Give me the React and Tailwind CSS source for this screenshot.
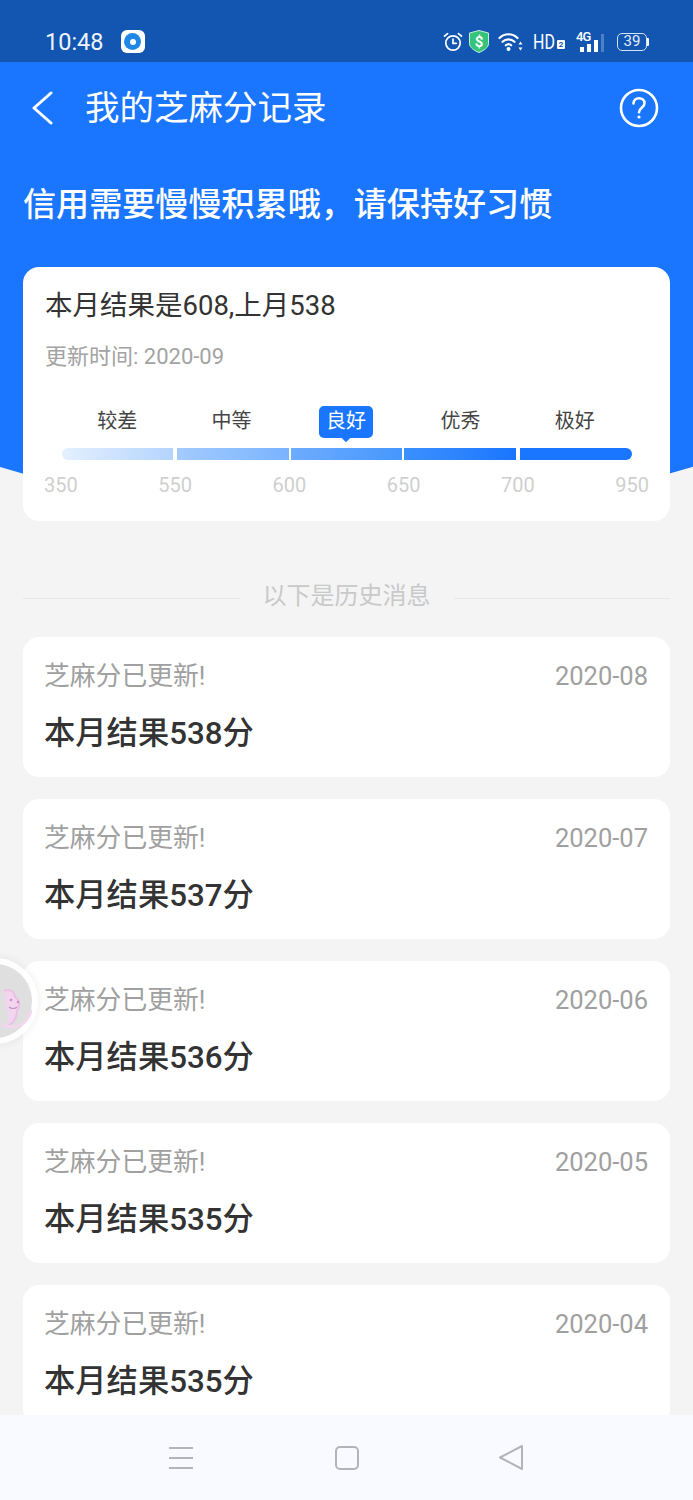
import React from 'react';

const FONT = 'font-[Roboto,"Noto_Sans_CJK_SC",sans-serif]';

const LEVELS = ['较差', '中等', '良好', '优秀', '极好'];
const SCORES = ['350', '550', '600', '650', '700', '950'];

const SEGMENTS = [
  'w-[111px] rounded-l-full bg-gradient-to-r from-[#e4f0fe] to-[#b4d4fd]',
  'ml-[4px] w-[112px] bg-gradient-to-r from-[#a3cbfd] to-[#79b4fe]',
  'ml-[2px] w-[111px] bg-gradient-to-r from-[#6dacfe] to-[#4597fe]',
  'ml-[2px] w-[112px] bg-gradient-to-r from-[#3b90fe] to-[#1a76ff]',
  'ml-[4px] w-[112px] rounded-r-full bg-[#1a76ff]',
];

const HISTORY = [
  { date: '2020-08', score: 538 },
  { date: '2020-07', score: 537 },
  { date: '2020-06', score: 536 },
  { date: '2020-05', score: 535 },
  { date: '2020-04', score: 535 },
];

const StatusBar = () => (
  <div className="flex h-[62px] shrink-0 items-end bg-[#1256b2] pb-[9px] pl-[45px] pr-[44px] text-white">
    <span className="mb-[-2px] text-[23.5px] leading-[26px] text-[#eef4fc]">10:48</span>
    <div className="ml-[17px] flex h-[23px] w-[24px] items-center justify-center rounded-[6px] bg-white">
      <div className="flex h-[17px] w-[17px] items-center justify-center rounded-full bg-[#2187e6]">
        <div className="h-[6px] w-[6px] rounded-full bg-white" />
      </div>
    </div>
    <div className="ml-auto flex items-center">
      <svg width="20" height="20" viewBox="0 0 20 20" fill="none" stroke="white" strokeWidth="1.7" strokeLinecap="round">
        <circle cx="10" cy="11" r="7.2" />
        <path d="M10 7v4.3h3.4M1.500 4.200 4.600 1.600M18.500 4.200l-3.100-2.600" />
      </svg>
      <svg className="ml-[6px]" width="20" height="23" viewBox="0 0 20 23">
        <path d="M10 .5 19.500 3v10.500c0 4-4.500 7-9.500 9-5-2-9.500-5-9.500-9V3z" fill="#35c47a" stroke="#c8f0da" strokeWidth="1" />
        <text x="10" y="16.500" textAnchor="middle" fontSize="15" fontWeight="700" fill="white" fontFamily="Roboto">$</text>
      </svg>
      <svg className="ml-[9px]" width="25" height="20" viewBox="0 0 25 20" fill="none" stroke="white" strokeWidth="2.200" strokeLinecap="round">
        <path d="M1.500 6C6.500 1 14.500 1 19.500 6M4.500 9.800c3.500-3.300 8.500-3.300 12 0M7.800 13.300c1.700-1.500 3.700-1.500 5.400 0" />
        <circle cx="10.500" cy="17" r="2" fill="white" stroke="none" />
        <path d="M22.500 9.500 24.500 12.500h-4zM22.500 18.500 24.500 15.500h-4z" fill="white" stroke="none" />
      </svg>
      <span className="ml-[10px] w-[22px] origin-left scale-x-[0.8] text-[20px] leading-none text-white">HD</span>
      <span className="ml-[2px] mt-[6px] flex h-[9px] w-[8px] items-center justify-center rounded-[1px] bg-white text-[8px] font-bold leading-none text-[#1256b2]">2</span>
      <div className="relative ml-[11px] h-[20px] w-[28px]">
        <span className="absolute left-0 top-[-1px] text-[13px] font-medium leading-[12px] tracking-[-1px] text-white">4G</span>
        <div className="absolute bottom-0 left-[4px] flex items-end gap-[3px]">
          <div className="h-[5px] w-[4px] bg-white" />
          <div className="h-[8px] w-[4px] bg-white" />
          <div className="h-[12px] w-[4px] bg-white" />
          <div className="h-[18px] w-[3px] bg-[#4f7fc6]" />
        </div>
      </div>
      <div className="ml-[13px] flex h-[18px] w-[30px] items-center justify-center rounded-[5px] border border-[#d5e2f4] text-[15px] leading-none text-[#e4edf9]">39</div>
      <div className="h-[8px] w-[2px] rounded-r-[1px] bg-white" />
    </div>
  </div>
);

const ScoreCard = () => (
  <div className="mx-[23px] h-[254px] rounded-[16px] bg-white pt-[21px]">
    <p className="pl-[22px] text-[27.5px] leading-[36px] text-[#333]">本月结果是608,上月538</p>
    <p className="mt-[18px] pl-[22px] text-[22px] leading-[30px] text-[#a3a3a3]">更新时间: 2020-09</p>
    <div className="ml-[37px] mr-[38px] mt-[34px] grid grid-cols-5">
      {LEVELS.map((level, i) => (
        <div key={level} className="flex justify-center">
          {i === 2 ? (
            <div className="relative flex h-[32px] w-[54px] items-center justify-center rounded-[5px] bg-[#1a76ff] pb-[2px] text-[20px] text-white">
              {level}
              <div className="absolute bottom-[-3px] left-[24px] h-[6px] w-[6px] rotate-45 bg-[#1a76ff]" />
            </div>
          ) : (
            <span className="text-[20px] leading-[30px] text-[#444]">{level}</span>
          )}
        </div>
      ))}
    </div>
    <div className="ml-[39px] mt-[10px] flex h-[12px]">
      {SEGMENTS.map((cls, i) => (
        <div key={i} className={cls} />
      ))}
    </div>
    <div className="mt-[11px] flex justify-between px-[21px] text-[20px] leading-[28px] text-[#cfcfcf]">
      {SCORES.map((s) => (
        <span key={s}>{s}</span>
      ))}
    </div>
  </div>
);

const HistoryCard = ({ date, score }) => (
  <div className="mx-[23px] mb-[22px] h-[140px] rounded-[16px] bg-white pl-[21px] pr-[22px] pt-[21px]">
    <div className="flex items-center justify-between leading-[36px] text-[#a0a0a0]">
      <span className="text-[25.8px]">芝麻分已更新!</span>
      <span className="text-[25.5px]">{date}</span>
    </div>
    <p className="mt-[19px] text-[31.3px] font-medium leading-[42px] text-[#333]">本月结果{score}分</p>
  </div>
);

const FloatingBall = () => (
  <div className="absolute left-[-48px] top-[958px] flex h-[86px] w-[86px] items-center justify-center rounded-full bg-white/85 shadow-[0_0_10px_rgba(0,0,0,0.08)]">
    <svg width="74" height="74" viewBox="0 0 74 74">
      <circle cx="37" cy="37" r="37" fill="#dfdfdf" />
      <path d="M46 27c5-3 11 1 11 6 5 3 5 10 2 14 0 6-3 11-8 14" fill="#f2d5ee" stroke="#eebfe6" strokeWidth="2" />
      <circle cx="53" cy="36" r="1.300" fill="#c88fc0" />
      <circle cx="60" cy="38" r="1.300" fill="#c88fc0" />
      <path d="M51 43c2 2 6 2 8 0" fill="none" stroke="#c88fc0" strokeWidth="1.200" />
      <path d="M44 60c9 6 22 3 27-8 1-3 3-5 4-6" fill="none" stroke="#f3d7ee" strokeWidth="3" />
      <circle cx="70" cy="20" r="1.200" fill="#f5e8f3" />
    </svg>
  </div>
);

const BottomNav = () => (
  <div className="absolute bottom-0 left-0 right-0 flex h-[85px] items-center bg-[#f9faff]">
    <div className="ml-[169px] flex w-[24px] flex-col gap-[8px]">
      <div className="h-[2px] bg-[#b4b4b8]" />
      <div className="h-[2px] bg-[#b4b4b8]" />
      <div className="h-[2px] bg-[#b4b4b8]" />
    </div>
    <div className="ml-[142px] h-[24px] w-[24px] rounded-[5px] border-2 border-[#b4b4b8]" />
    <svg className="ml-[139px]" width="26" height="27" viewBox="0 0 26 27" fill="none" stroke="#b4b4b8" strokeWidth="2" strokeLinejoin="round">
      <path d="M24 2 2 13.500 24 25z" />
    </svg>
  </div>
);

export default function App() {
  return (
    <div className={`relative flex h-[1500px] w-[693px] flex-col overflow-hidden bg-[#f4f4f4] ${FONT}`}>
      {/* blue backdrop with curved bottom edge */}
      <div className="absolute left-[-854px] top-[-1882px] h-[2400px] w-[2400px] rounded-full bg-[#1a76ff]" />

      <div className="relative flex flex-col">
        <StatusBar />

        <div className="flex h-[92px] shrink-0 items-center pl-[31px] pr-[34px] text-white">
          <svg width="22" height="34" viewBox="0 0 22 34" fill="none" stroke="white" strokeWidth="3" strokeLinecap="round" strokeLinejoin="round">
            <path d="M20 2 3 17l17 15" />
          </svg>
          <h1 className="ml-[32px] text-[34.5px] leading-none">我的芝麻分记录</h1>
          <svg className="ml-auto" width="40" height="40" viewBox="0 0 40 40" fill="none" stroke="white" strokeWidth="2.600" strokeLinecap="round">
            <circle cx="20" cy="20" r="18" />
            <path d="M14.500 15.500c0-3.300 2.500-5.300 5.500-5.300s5.500 2 5.500 5c0 4.500-5.500 4.500-5.500 9" />
            <circle cx="20" cy="29" r="1.600" fill="white" stroke="none" />
          </svg>
        </div>

        <h2 className="mb-[41px] ml-[23px] mt-[30px] text-[33.1px] font-medium leading-[42px] text-white">信用需要慢慢积累哦，请保持好习惯</h2>

        <ScoreCard />

        <div className="mb-[23px] mt-[57px] flex h-[36px] items-center px-[23px]">
          <div className="mt-[5px] h-px flex-1 bg-[#e8e8e8]" />
          <span className="mx-[23px] text-[24px] leading-[36px] text-[#c9c9c9]">以下是历史消息</span>
          <div className="mt-[5px] h-px flex-1 bg-[#e8e8e8]" />
        </div>

        {HISTORY.map((item) => (
          <HistoryCard key={item.date} date={item.date} score={item.score} />
        ))}
      </div>

      <FloatingBall />
      <BottomNav />
    </div>
  );
}
